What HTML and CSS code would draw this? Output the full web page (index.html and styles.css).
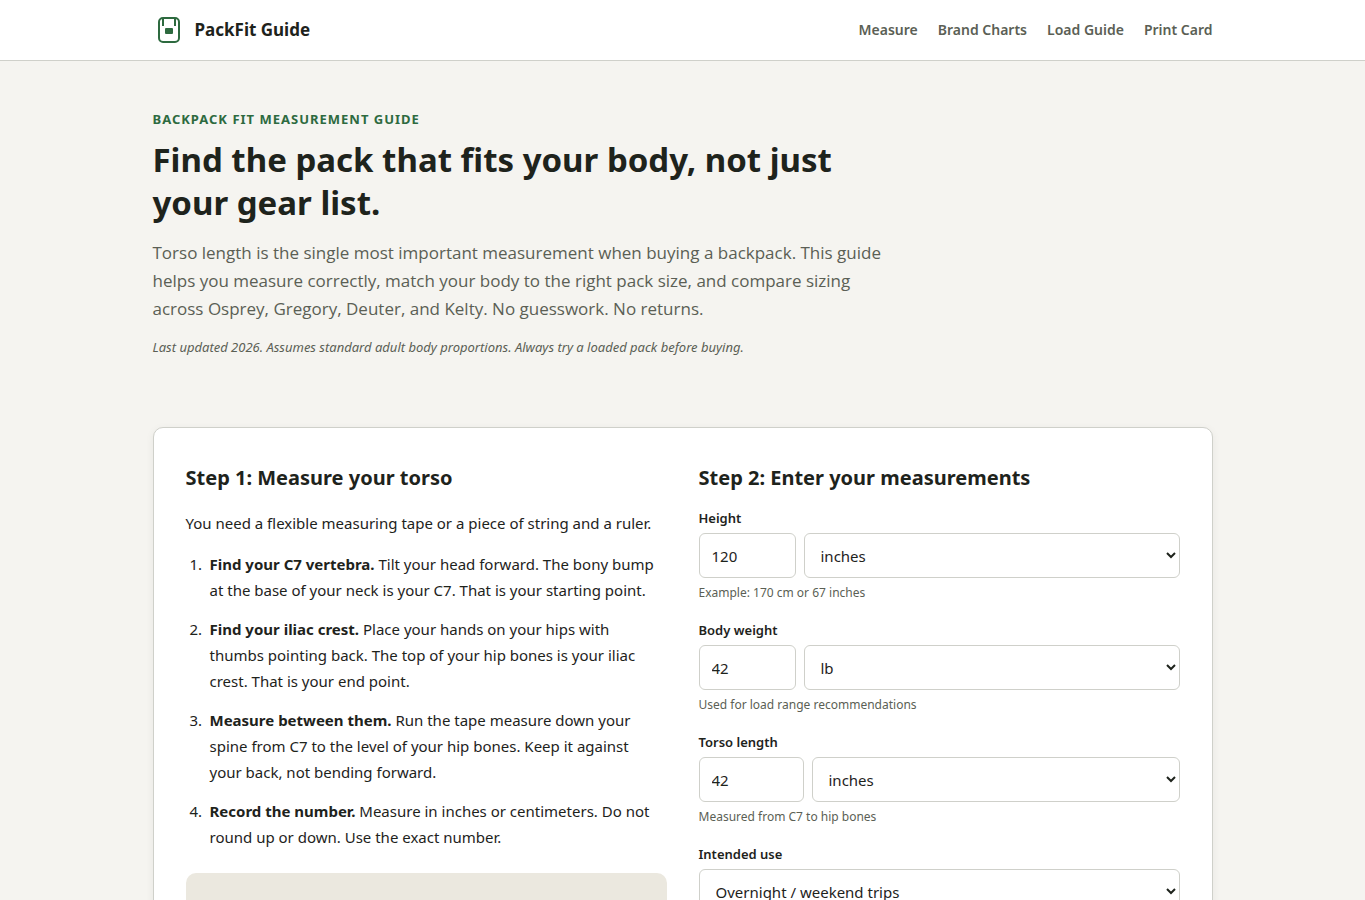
FILE: index.html
```html
<!DOCTYPE html>
<html lang="en">
<head>
  <meta charset="UTF-8">
  <meta name="viewport" content="width=device-width, initial-scale=1.0">
  <title>PackFit Guide</title>
  <link rel="stylesheet" href="styles.css">
</head>
<body>
  <header class="site-header">
    <div class="container header-inner">
      <a href="#" class="logo">
        <svg width="32" height="32" viewBox="0 0 32 32" fill="none" stroke="#2d6a3f" stroke-width="2" aria-hidden="true">
          <rect x="6" y="4" width="20" height="24" rx="4" />
          <path d="M10 4v8M22 4v8" />
          <rect x="12" y="14" width="8" height="6" rx="1" fill="#2d6a3f" stroke="none" />
        </svg>
        <span>PackFit Guide</span>
      </a>
      <nav class="site-nav">
        <a href="#measure">Measure</a>
        <a href="#brands">Brand Charts</a>
        <a href="#load">Load Guide</a>
        <a href="#print">Print Card</a>
      </nav>
    </div>
  </header>

  <main class="container">
    <section class="hero">
      <p class="eyebrow">Backpack Fit Measurement Guide</p>
      <h1>Find the pack that fits your body, not just your gear list.</h1>
      <p class="lead">Torso length is the single most important measurement when buying a backpack. This guide helps you measure correctly, match your body to the right pack size, and compare sizing across Osprey, Gregory, Deuter, and Kelty. No guesswork. No returns.</p>
      <p class="note">Last updated 2026. Assumes standard adult body proportions. Always try a loaded pack before buying.</p>
    </section>

    <section class="card" id="measure">
      <div class="steps">
        <h2>Step 1: Measure your torso</h2>
        <p>You need a flexible measuring tape or a piece of string and a ruler.</p>
        <ol>
          <li><strong>Find your C7 vertebra.</strong> Tilt your head forward. The bony bump at the base of your neck is your C7. That is your starting point.</li>
          <li><strong>Find your iliac crest.</strong> Place your hands on your hips with thumbs pointing back. The top of your hip bones is your iliac crest. That is your end point.</li>
          <li><strong>Measure between them.</strong> Run the tape measure down your spine from C7 to the level of your hip bones. Keep it against your back, not bending forward.</li>
          <li><strong>Record the number.</strong> Measure in inches or centimeters. Do not round up or down. Use the exact number.</li>
        </ol>
        <div class="diagram"></div>
      </div>

      <form class="fit-form">
        <h2>Step 2: Enter your measurements</h2>
        <div class="field">
          <label for="height">Height</label>
          <div class="input-row">
            <input type="text" inputmode="decimal" id="height" value="120">
            <select id="height-unit" aria-label="Height unit">
              <option>inches</option>
            </select>
          </div>
          <p class="hint">Example: 170 cm or 67 inches</p>
        </div>
        <div class="field">
          <label for="weight">Body weight</label>
          <div class="input-row">
            <input type="text" inputmode="decimal" id="weight" value="42">
            <select id="weight-unit" aria-label="Weight unit">
              <option>lb</option>
            </select>
          </div>
          <p class="hint">Used for load range recommendations</p>
        </div>
        <div class="field">
          <label for="torso">Torso length</label>
          <div class="input-row input-row-wide">
            <input type="text" inputmode="decimal" id="torso" value="42">
            <select id="torso-unit" aria-label="Torso unit">
              <option>inches</option>
            </select>
          </div>
          <p class="hint">Measured from C7 to hip bones</p>
        </div>
        <div class="field">
          <label for="use">Intended use</label>
          <select id="use">
            <option>Overnight / weekend trips</option>
          </select>
        </div>
      </form>
    </section>
  </main>
</body>
</html>
```
FILE: styles.css
```css
* {
  margin: 0;
  padding: 0;
  box-sizing: border-box;
}

body {
  font-family: "Noto Sans", "Open Sans", sans-serif;
  font-size: 15px;
  line-height: 26px;
  color: #1e231c;
  background: #f5f4f0;
}

.container {
  max-width: 1100px;
  margin: 0 auto;
  padding: 0 20px;
}

.site-header {
  background: #fff;
  border-bottom: 1px solid #cfd0ca;
}

.header-inner {
  display: flex;
  align-items: center;
  justify-content: space-between;
  height: 60px;
}

.logo {
  display: flex;
  align-items: center;
  gap: 10px;
  font-size: 17px;
  font-weight: 700;
  color: #1e231c;
  text-decoration: none;
}

.site-nav {
  display: flex;
  gap: 20px;
}

.site-nav a {
  font-size: 14px;
  font-weight: 600;
  color: #5b5f55;
  text-decoration: none;
}

.hero {
  max-width: 740px;
  padding: 48px 0 70px;
}

.eyebrow {
  font-size: 13px;
  font-weight: 700;
  line-height: 20px;
  letter-spacing: 1px;
  text-transform: uppercase;
  color: #2d6a3f;
  margin-bottom: 9px;
}

h1 {
  font-size: 33px;
  line-height: 43px;
  margin-bottom: 15px;
}

.lead {
  font-family: "Open Sans", "Noto Sans", sans-serif;
  font-size: 17px;
  line-height: 28px;
  color: #5b5f55;
  margin-bottom: 14px;
}

.note {
  font-size: 13px;
  line-height: 20px;
  font-style: italic;
  color: #5b5f55;
}

.card {
  display: grid;
  grid-template-columns: 1fr 1fr;
  gap: 32px;
  padding: 32px;
  background: #fff;
  border: 1px solid #cfd0ca;
  border-radius: 10px;
  box-shadow: 0 2px 8px rgba(0, 0, 0, 0.06);
}

h2 {
  font-size: 20px;
  line-height: 36px;
  margin-bottom: 11px;
}

.steps h2 {
  margin-bottom: 14px;
}

.steps ol {
  margin-top: 15px;
  padding: 0 6px 0 24px;
}

.steps li {
  margin-bottom: 13px;
}

.steps li::marker {
  content: counter(list-item) ".\2002";
}

.diagram {
  height: 240px;
  margin-top: 23px;
  background: #ebe8df;
  border-radius: 10px;
}

.field {
  margin-bottom: 16px;
}

.field label {
  display: block;
  font-size: 13px;
  font-weight: 600;
  line-height: 22px;
  margin-bottom: 4px;
}

.input-row {
  display: grid;
  grid-template-columns: 97px 1fr;
  gap: 8px;
}

.input-row-wide {
  grid-template-columns: 105px 1fr;
}

input,
select {
  width: 100%;
  height: 45px;
  padding: 0 12px;
  font-family: inherit;
  font-size: 15px;
  color: #1e231c;
  background: #fff;
  border: 1px solid #cfd0ca;
  border-radius: 6px;
}

.hint {
  font-size: 12px;
  line-height: 20px;
  color: #5b5f55;
  margin-top: 5px;
}
```
